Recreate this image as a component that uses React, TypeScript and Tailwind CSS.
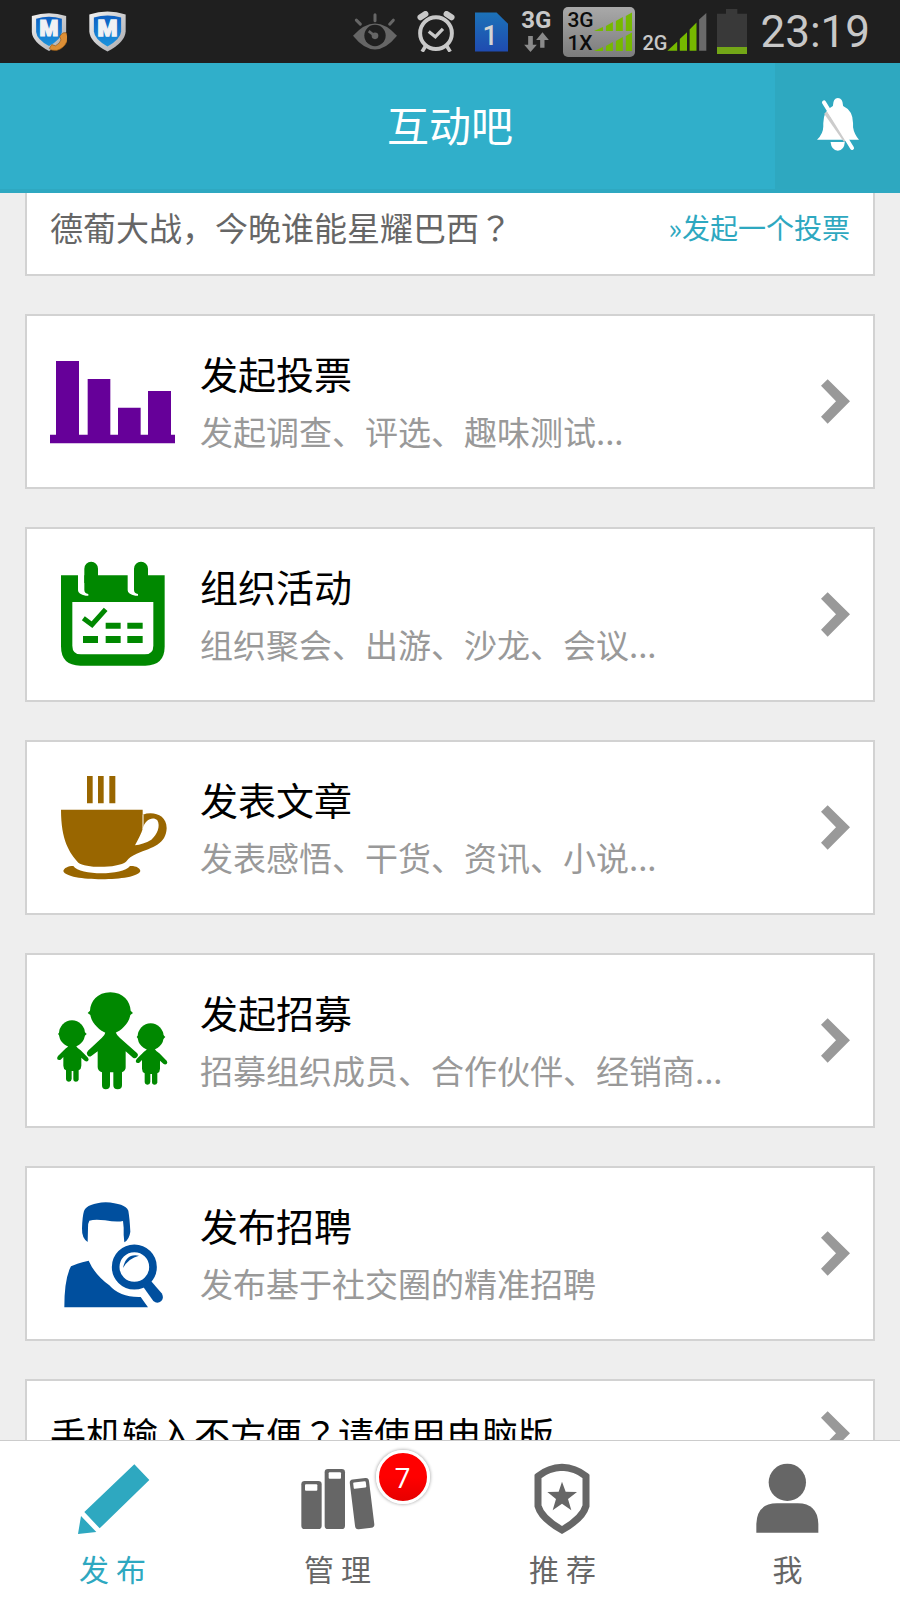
import React from "react";

function ShieldBadge({ id, call }: { id: string; call?: boolean }) {
  return (
    <svg viewBox="0 0 114 124" className={call ? "h-[38px] w-9" : "h-[41px] w-[37px]"} aria-hidden="true">
      <defs>
        <linearGradient id={id + "rim"} x1="0" y1="0" x2="1" y2="1">
          <stop offset="0" stopColor="#f2f2f2" />
          <stop offset="1" stopColor="#a8a8ac" />
        </linearGradient>
        <linearGradient id={id + "fill"} x1="0" y1="0" x2="0" y2="1">
          <stop offset="0" stopColor="#0d5fc2" />
          <stop offset="1" stopColor="#1c93dc" />
        </linearGradient>
      </defs>
      <path d="M1 10Q57-9 113 10V62Q111 95 57 124Q3 95 1 62Z" fill={`url(#${id}rim)`} />
      <path d="M15 19Q57 6 99 19V62Q97 86 57 108Q17 86 15 62Z" fill={`url(#${id}fill)`} />
      <text
        x="57"
        y="75"
        textAnchor="middle"
        fontFamily="Roboto, sans-serif"
        fontWeight="900"
        fontSize="70"
        fill="#f1f1f4"
        stroke="#f1f1f4"
        strokeWidth="4"
      >
        M
      </text>
      {call && (
        <path
          d="M112 64Q122 76 116 92Q106 116 82 122Q64 124 58 116L66 103L78 107Q92 100 96 88L92 76L102 65Z"
          fill="#dd8f36"
          stroke="#8a5312"
          strokeWidth="2"
        />
      )}
    </svg>
  );
}

function StatusBar() {
  return (
    <div className="flex h-[63px] shrink-0 items-center bg-[#1f1f1f] pr-[30px] pl-[31px] font-[Roboto,sans-serif] text-[#c8c8c8]">
      <div className="flex items-center gap-[22px]">
        <ShieldBadge id="a" call />
        <ShieldBadge id="b" />
      </div>
      <div className="ml-auto flex items-center">
        <svg viewBox="42 36 132 110" className="mr-5 h-[37px] w-11" aria-hidden="true">
          <path d="M42 104Q75 67 108 67Q141 67 174 104Q141 145 108 145Q75 145 42 104Z" fill="#666" />
          <circle cx="108" cy="103" r="32" fill="#1f1f1f" />
          <circle cx="108" cy="104" r="10" fill="#666" />
          <path d="M108 41V59M52 57L64 69M163 57L152 69" stroke="#666" strokeWidth="9" strokeLinecap="round" />
          <path d="M89 90L106 103" stroke="#666" strokeWidth="8" />
        </svg>
        <svg viewBox="232 29 114 124" className="mr-5 h-[41px] w-[38px]" fill="none" stroke="#c8c8c8" aria-hidden="true">
          <circle cx="289" cy="96" r="48" strokeWidth="12" />
          <path d="M267 91L287 107L310 83" strokeWidth="10" />
          <path d="M242 48L257 38M321 38L336 48" strokeWidth="18" strokeLinecap="round" />
          <path d="M258 134L247 152M321 134L332 152" strokeWidth="11" />
        </svg>
        <svg viewBox="407 31 101 119" className="mr-[13px] h-10 w-[33px]" aria-hidden="true">
          <defs>
            <linearGradient id="sim" x1="0" y1="0" x2="0" y2="1">
              <stop offset="0" stopColor="#1c72b8" />
              <stop offset="1" stopColor="#1f4bb0" />
            </linearGradient>
          </defs>
          <path d="M407 31H473L508 65V150H407Z" fill="url(#sim)" />
          <text x="453" y="129" textAnchor="middle" fontFamily="Roboto, sans-serif" fontWeight="500" fontSize="82" fill="#d4d4d4">
            1
          </text>
        </svg>
        <div className="mr-3 flex flex-col items-center pb-1">
          <span className="text-2xl leading-6 font-bold">3G</span>
          <svg viewBox="556 98 74 60" className="h-5 w-[25px]" fill="#8a8a8a" aria-hidden="true">
            <path d="M568 110H582V136H594L575 158L556 136H568ZM604 145H617V122H630L611 99L592 122H604Z" />
          </svg>
        </div>
        <div className="mr-[7px] flex h-[50px] w-[72px] items-center justify-between rounded-[5px] bg-linear-to-b from-[#a9a9a9] to-[#7c7c7c] pr-[3px] pl-1 text-[21px] font-medium text-[#0c0c0c]">
          <div className="leading-[23px]">
            <div>3G</div>
            <div>1X</div>
          </div>
          <svg viewBox="0 0 39 39" className="h-[39px] w-[39px]" fill="#76b900" aria-hidden="true">
            <path d="M0 19L9 15V19ZM12 14L19 10V19H12ZM22 9L29 5V19H22ZM32 4L39 0V19H32Z" />
            <path d="M0 39L9 35V39ZM12 34L19 30V39H12ZM22 29L29 25V39H22ZM32 24L39 20V39H32Z" />
          </svg>
        </div>
        <div className="mr-2.5 flex items-end">
          <span className="text-xl leading-4 font-medium">2G</span>
          <svg viewBox="205 38 120 116" className="h-[38px] w-10" fill="#76b900" aria-hidden="true">
            <path d="M205 153L235 126V153ZM243 117L265 97V153H243ZM273 88L294 67V153H273Z" />
            <path d="M302 58L324 38V153H302Z" fill="#6a6a6a" />
          </svg>
        </div>
        <svg viewBox="354 24 90 135" className="mr-[13px] h-[45px] w-[30px]" aria-hidden="true">
          <path d="M381 24H415V38H444V159H354V38H381Z" fill="#393939" />
          <path d="M354 138H444V159H354Z" fill="#73a617" />
        </svg>
        <span className="text-[44px] leading-none">23:19</span>
      </div>
    </div>
  );
}

function Header() {
  return (
    <header className="relative flex h-[130px] shrink-0 items-center justify-center border-b-4 border-[#2ea8c1] bg-[#30afca] pb-[5px]">
      <h1 className="text-[42px] leading-[60px] text-white">互动吧</h1>
      <button
        type="button"
        aria-label="消息提醒"
        className="absolute inset-y-0 right-0 flex w-[125px] items-center justify-center bg-[#2ea8c0] pb-[3px]"
      >
        <svg viewBox="648 294 127 160" className="h-[53px] w-[42px]" aria-hidden="true">
          <path
            d="M711 294Q726 294 727 318Q757 332 757 370V382Q760 402 775 420H648Q667 402 667 380V370Q667 332 696 318Q697 294 711 294Z"
            fill="#fff"
          />
          <path d="M689 427H732Q730 453 711 453Q692 453 689 427Z" fill="#fff" />
          <path d="M674 338L734 424" stroke="#ccc" strokeWidth="11" />
          <path d="M669 307L754 445" stroke="#fff" strokeWidth="12" strokeLinecap="round" />
        </svg>
      </button>
    </header>
  );
}

function Chevron() {
  return (
    <svg viewBox="1112 601 87 134" className="ml-auto h-[45px] w-[29px] shrink-0" aria-hidden="true">
      <path d="M1132 601L1199 667L1132 735L1112 714L1157 667L1112 621Z" fill="#999" />
    </svg>
  );
}

const iconClass = "h-[110px] w-[126px] shrink-0";

function BarsIcon() {
  return (
    <svg viewBox="150 502 378 330" className={iconClass} fill="#609" aria-hidden="true">
      <path d="M168 544H237V765H263V598H331V765H354V684H422V765H444V634H513V765H525V791H150V765H168Z" />
    </svg>
  );
}

function CalendarIcon() {
  return (
    <svg viewBox="90 121 378 330" className={iconClass} fill="#080" aria-hidden="true">
      <path d="M123 167H434V380Q434 438 376 438H181Q123 438 123 380Z" />
      <path d="M174 160H193V210Q193 221 205 223V228H197Q174 224 174 212ZM323 160H342V210Q342 221 354 223V228H346Q323 224 323 212Z" fill="#fff" />
      <path d="M193 147A20 20 0 0 1 234 147V190H193ZM342 147A20 20 0 0 1 384 147V190H342Z" />
      <path d="M157 247H400V378Q400 404 374 404H183Q157 404 157 378Z" fill="#fff" />
      <path d="M190 296L216 315L257 269" fill="none" stroke="#080" strokeWidth="15" />
      <path d="M257 309H302V327H257ZM322 309H368V327H322ZM189 349H234V370H189ZM257 349H302V370H257ZM322 349H368V370H322Z" />
    </svg>
  );
}

function CupIcon() {
  return (
    <svg viewBox="90 759 378 330" className={iconClass} fill="#960" aria-hidden="true">
      <path d="M201 768H218V850H201ZM234 768H251V850H234ZM268 768H286V850H268Z" />
      <path
        fillRule="evenodd"
        d="M123 869H368V884C400 873 440 884 440 925C438 972 400 982 350 1001Q328 1010 318 1025C296 1044 198 1046 175 1028C148 998 123 960 123 869ZM368 927C374 900 398 888 412 901C422 918 412 944 394 959C378 969 360 974 345 976C356 956 364 940 368 927Z"
      />
      <path d="M369 884V928" stroke="#fff" strokeWidth="3" />
      <path d="M160 1038C180 1067 308 1067 330 1038C348 1037 360 1044 361 1053C352 1086 138 1086 130 1053C132 1044 144 1038 160 1038Z" />
    </svg>
  );
}

function Child() {
  return (
    <>
      <ellipse cx="156" cy="280" rx="39" ry="40" />
      <path d="M114 281L119 275H194L200 281L193 288H120Z" />
      <path d="M146 314H166Q172 324 182 330L204 352Q208 358 204 362Q199 365 194 361L184 352V376Q184 386 176 390V418Q174 424 168 424Q160 424 160 416V392H155V416Q154 424 147 424Q139 424 138 416V390Q130 386 130 376V350L122 358Q116 361 112 357Q110 352 114 347L136 325Q144 322 146 314Z" />
    </>
  );
}

function PeopleIcon() {
  return (
    <svg viewBox="90 137 378 330" className={iconClass} fill="#080" aria-hidden="true">
      <path d="M271 156C310 156 331 184 332 211L339 218L331 224C326 252 303 270 284 279H259C240 270 216 252 211 224L203 218L210 211C211 184 232 156 271 156Z" />
      <path d="M258 272H285Q290 285 300 293L350 337Q357 343 351 350Q346 356 339 352L317 333V380Q318 390 306 396V435Q306 447 293 447Q280 447 280 435V396H270V435Q270 447 257 447Q246 447 246 435V396Q233 392 233 380V333L215 346Q207 352 202 344Q198 337 204 331L245 293Q255 284 258 272Z" />
      <Child />
      <g transform="translate(236 9)">
        <Child />
      </g>
    </svg>
  );
}

function RecruitIcon() {
  return (
    <svg viewBox="90 772 378 330" className={iconClass} fill="#004f9e" aria-hidden="true">
      <path d="M203 901Q185 890 186 860Q187 825 192 808Q202 785 257 782Q315 785 325 807Q329 830 331 870Q328 893 313 902Q310 880 311 858L309 838Q290 842 255 836Q225 832 208 837Q203 845 204 860Z" />
      <path d="M133 1097Q133 1010 153 974Q165 967 206 957Q225 1000 268 1031Q300 1068 362 1066L384 1097Z" />
      <circle cx="343" cy="976" r="56" fill="none" stroke="#004f9e" strokeWidth="23" />
      <path d="M309 979Q318 934 357 942Q326 949 309 979Z" />
      <path d="M370 1036L391 1016L425 1055Q433 1068 424 1078Q412 1088 400 1078Z" />
    </svg>
  );
}

const entries = [
  { title: "发起投票", note: "发起调查、评选、趣味测试...", Icon: BarsIcon },
  { title: "组织活动", note: "组织聚会、出游、沙龙、会议...", Icon: CalendarIcon },
  { title: "发表文章", note: "发表感悟、干货、资讯、小说...", Icon: CupIcon },
  { title: "发起招募", note: "招募组织成员、合作伙伴、经销商...", Icon: PeopleIcon },
  { title: "发布招聘", note: "发布基于社交圈的精准招聘", Icon: RecruitIcon },
];

const navIcon = "h-[72px] w-[76px]";

function PencilIcon() {
  return (
    <svg viewBox="224 309 228 216" className={navIcon} fill="#2ea8c0" aria-hidden="true">
      <path d="M402 313L447 360L298 505L252 456ZM242 468L288 516L233 522Z" />
    </svg>
  );
}

function BooksIcon() {
  return (
    <svg viewBox="899 309 228 216" className={navIcon} fill="#666" aria-hidden="true">
      <rect x="903" y="363" width="61" height="144" rx="10" />
      <rect x="914" y="373" width="37" height="19" rx="3" fill="#fff" />
      <rect x="973" y="327" width="61" height="180" rx="10" />
      <rect x="985" y="337" width="37" height="19" rx="3" fill="#fff" />
      <g transform="rotate(-7 1085 430)">
        <rect x="1056" y="356" width="58" height="150" rx="10" />
        <rect x="1066" y="365" width="38" height="19" rx="3" fill="#fff" />
      </g>
    </svg>
  );
}

function ShieldStarIcon() {
  return (
    <svg viewBox="224 309 228 216" className={navIcon} fill="#666" aria-hidden="true">
      <path
        d="M335 322Q375 323 407 349V438Q397 475 335 510Q273 475 263 438V349Q295 323 335 322Z"
        fill="none"
        stroke="#666"
        strokeWidth="21"
      />
      <path d="M335 365L346 395L380 396L353 417L363 451L335 431L307 451L317 417L291 396L325 395Z" />
    </svg>
  );
}

function PersonIcon() {
  return (
    <svg viewBox="899 309 228 216" className={navIcon} fill="#666" aria-hidden="true">
      <circle cx="1011" cy="367" r="56" />
      <path d="M918 518V492Q920 430 980 430H1042Q1102 430 1104 492V518Z" />
    </svg>
  );
}

const tabs = [
  { label: "发布", Icon: PencilIcon, active: true, badge: 0 },
  { label: "管理", Icon: BooksIcon, active: false, badge: 7 },
  { label: "推荐", Icon: ShieldStarIcon, active: false, badge: 0 },
  { label: "我", Icon: PersonIcon, active: false, badge: 0 },
];

function TabBar() {
  return (
    <nav className="grid shrink-0 grid-cols-4 border-t border-[#ccc] bg-white pt-[22px] pb-[14px]">
      {tabs.map(({ label, Icon, active, badge }) => (
        <a
          key={label}
          href="#"
          aria-label={label}
          aria-current={active ? "page" : undefined}
          className={"flex flex-col items-center " + (active ? "text-[#2ea8c0]" : "text-[#666]")}
        >
          <span className="relative">
            <Icon />
            {badge > 0 && (
              <span className="absolute -top-[13px] left-[76px] flex size-[54px] items-center justify-center rounded-full border-3 border-white bg-linear-to-b from-[#ff0000] from-50% to-[#e60000] font-['Open_Sans',sans-serif] text-[28px] leading-none text-white shadow-[0_0_3px_1px_rgba(0,0,0,0.25)]">
                {badge}
              </span>
            )}
          </span>
          <span className="mt-[15px] flex gap-[7px] text-[30px] leading-9">
            {label.split("").map((char) => (
              <span key={char}>{char}</span>
            ))}
          </span>
        </a>
      ))}
    </nav>
  );
}

/* The Japanese face centres the full-width question mark in its cell. */
function QuestionMark() {
  return <span className="font-['Noto_Sans_CJK_JP',sans-serif]">？</span>;
}

const card = "flex shrink-0 items-center border-2 border-[#d2d2d2] bg-white px-[23px]";

export default function App() {
  return (
    <div className="flex h-screen flex-col bg-[#eee] font-['Noto_Sans_CJK_SC',sans-serif]">
      <StatusBar />
      <Header />
      <main className="flex min-h-0 flex-1 flex-col gap-[38px] overflow-y-auto px-[25px] [scrollbar-width:none]">
        <section className={card + " justify-between border-t-0 pt-2 pb-[21px]"}>
          <p className="text-[33px] leading-[52px] text-[#666]">
            德葡大战，今晚谁能星耀巴西
            <QuestionMark />
          </p>
          <a href="#" className="text-[28px] leading-[52px] text-[#2ea8c0]">
            »发起一个投票
          </a>
        </section>
        {entries.map(({ title, note, Icon }) => (
          <a key={title} href="#" className={card + " h-[175px] gap-6"}>
            <Icon />
            <span className="flex flex-col">
              <span className="text-[38px] leading-[58px] text-black">{title}</span>
              <span className="text-[33px] leading-[58px] text-[#999]">{note}</span>
            </span>
            <Chevron />
          </a>
        ))}
        <a href="#" className={card + " h-[108px]"}>
          <span className="text-4xl leading-[60px] text-black">
            手机输入不方便
            <QuestionMark />
            请使用电脑版
          </span>
          <Chevron />
        </a>
      </main>
      <TabBar />
    </div>
  );
}
